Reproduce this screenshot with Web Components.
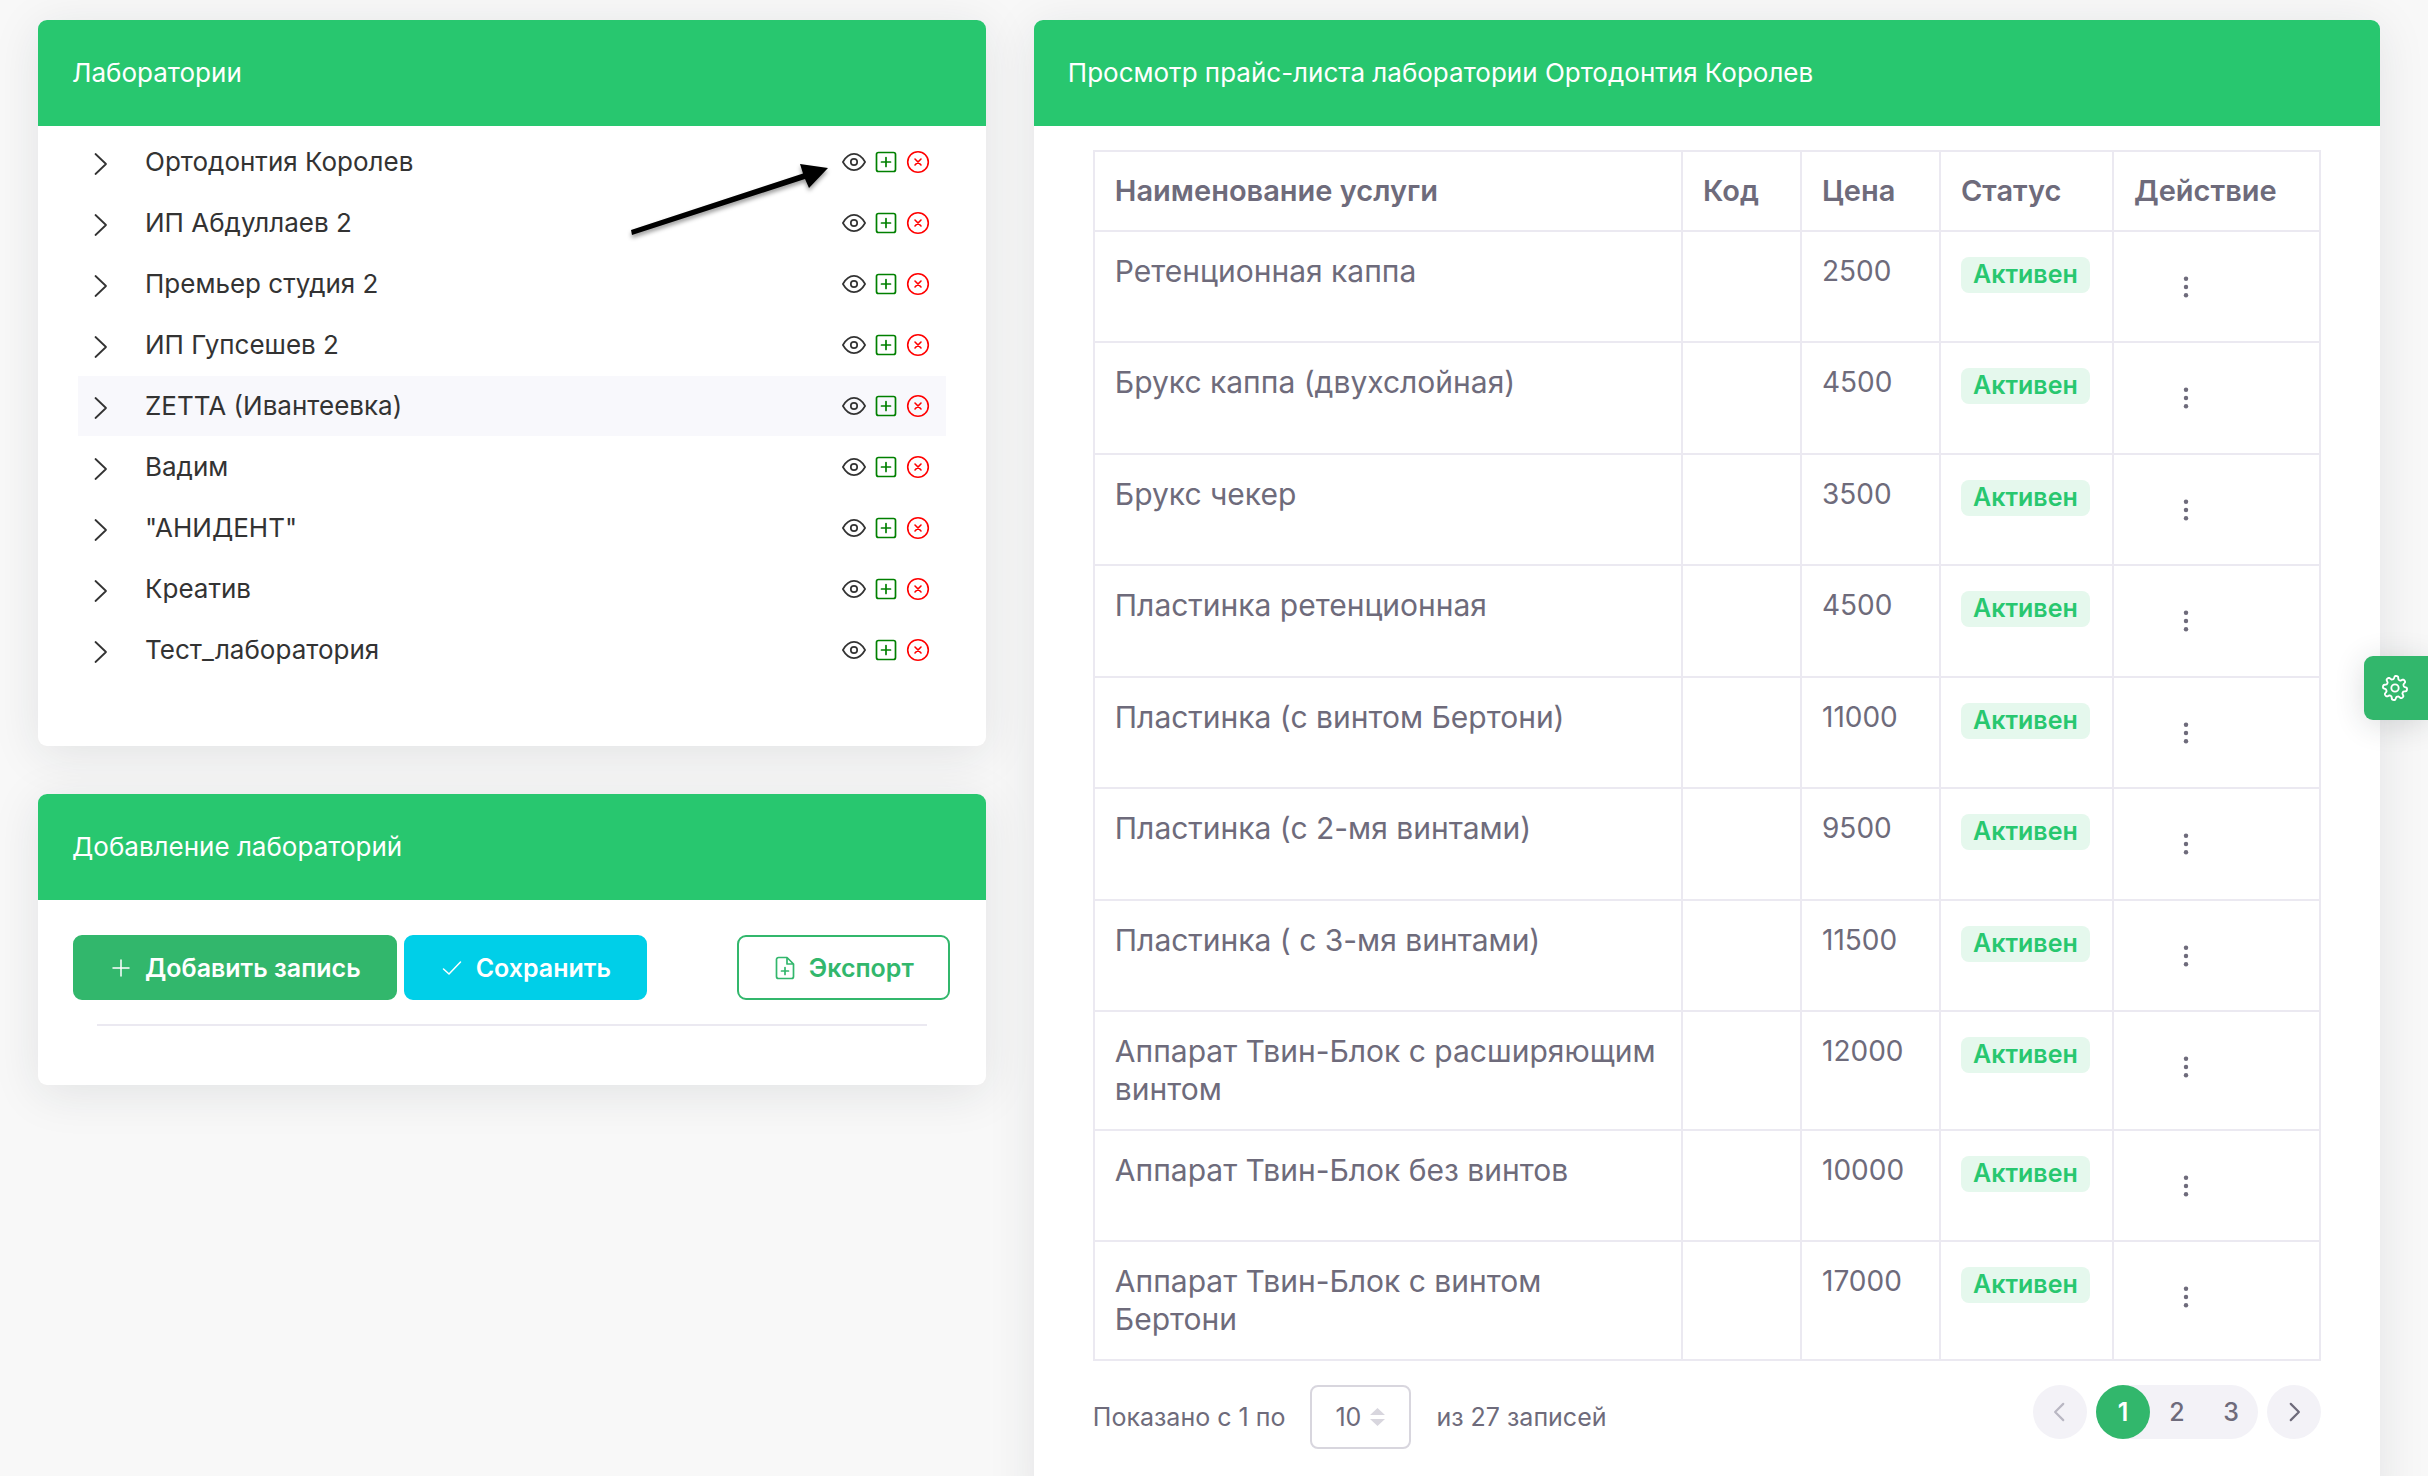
<!DOCTYPE html>
<html lang="ru">
<head>
<meta charset="utf-8">
<meta name="viewport" content="width=device-width, initial-scale=1">
<title>Лаборатории</title>
<style>
  html, body { height: 100%; }
  body {
    margin: 0; background: #f8f8f8; overflow: hidden; color: #6e6b7b;
    font-family: Inter, "Noto Sans", sans-serif; font-size: 25px; line-height: 36px;
    --green: #28c76f; --primary: #32b76c; --line: #ebe9f1;
  }
</style>
</head>
<body>
<lab-page></lab-page>

<script>
const svg = (size, body, width = 2) =>
  `<svg width="${size}" height="${size}" viewBox="0 0 24 24" fill="none" stroke="currentColor" stroke-width="${width}" stroke-linecap="round" stroke-linejoin="round" aria-hidden="true">${body}</svg>`;

const icons = {
  chevron: svg(24, '<path d="M6.500 2l10.500 10L6.500 22"/>', 1.8),
  left: svg(26, '<path d="M15 4.500L7.500 12l7.500 7.500"/>', 2),
  right: svg(26, '<path d="M9 4.500l7.500 7.500L9 19.500"/>', 2),
  eye: svg(24, '<path d="M.9 12C4 6.500 7.600 3.900 12 3.900S20 6.500 23.100 12c-3.100 5.500-6.700 8.100-11.100 8.100S4 17.500.9 12z"/><circle cx="12" cy="12" r="3.200"/>', 1.7),
  plusBox: svg(24, '<rect x="2.500" y="2.500" width="19" height="19" rx="2"/><path d="M12 7.500v9M7.500 12h9"/>', 1.7),
  cross: svg(24, '<circle cx="12" cy="12" r="10.300"/><path d="M9 9l6 6M15 9l-6 6"/>', 1.6),
  plus: svg(24, '<path d="M12 4v16M4 12h16"/>', 1.5),
  check: svg(24, '<path d="M3.500 13l5.500 5L20.500 6"/>', 1.5),
  file: svg(24, '<path d="M14 1.500H5.500a2 2 0 0 0-2 2v17a2 2 0 0 0 2 2h13a2 2 0 0 0 2-2V8zM14 1.500V8h6.500M12 11.500v7M8.500 15h7"/>', 1.7),
  dots: svg(28, '<g fill="currentColor" stroke="none"><circle cx="12" cy="5" r="1.900"/><circle cx="12" cy="12" r="1.900"/><circle cx="12" cy="19" r="1.900"/></g>'),
  gear: (() => {
    let d = '';
    for (let i = 0; i < 144; i++) {
      const a = i / 144 * Math.PI * 2;
      const r = 9.7 + 1.5 * Math.tanh(2 * Math.sin(a * 8 + .6));
      d += (i ? 'L' : 'M') + (12 + r * Math.cos(a)).toFixed(2) + ' ' + (12 + r * Math.sin(a)).toFixed(2);
    }
    return svg(26, `<path d="${d}z"/><circle cx="12" cy="12" r="3.400"/>`, 1.7);
  })()
};

function define(name, html, setup) {
  const template = document.createElement('template');
  template.innerHTML = html;
  customElements.define(name, class extends HTMLElement {
    constructor() {
      super();
      this.attachShadow({ mode: 'open' }).append(template.content.cloneNode(true));
    }
    connectedCallback() { if (setup) setup(this, this.shadowRoot); }
  });
}

define('app-icon', `<style>:host{display:inline-flex}span,svg{display:block}</style><span></span>`,
  (host, root) => { root.querySelector('span').innerHTML = icons[host.getAttribute('name')] || ''; });

define('lab-card', `
<style>
  :host { display: block; background: #fff; border-radius: 9px; box-shadow: 0 8px 48px rgba(34,41,47,.1); }
  header { display: flex; align-items: center; min-height: 36px; padding: 35px 34px; background: var(--green); color: #fff; border-radius: 9px 9px 0 0; }
  h2 { margin: 0; font-size: 26px; line-height: 36px; font-weight: 400; }
</style>
<header><h2><slot name="title"></slot></h2></header>
<slot></slot>`);

define('tree-row', `
<style>
  :host { display: flex; align-items: center; box-sizing: border-box; height: 61px; padding: 0 16px 2px 11px; color: #333; }
  :host([active]) { background: linear-gradient(#f8f8fc, #f8f8fc) 0 0 / 100% 60px no-repeat; }
  button { display: flex; padding: 0; border: 0; background: none; color: inherit; cursor: pointer; }
  .name { flex: 1; padding-left: 32px; font-size: 26px; line-height: 36px; }
  .toggle { padding-top: 4px; }
  .actions { display: flex; gap: 8px; }
  .add { color: #008000; }
  .remove { color: #f00; }
</style>
<button class="toggle" aria-label="Развернуть"><app-icon name="chevron"></app-icon></button>
<span class="name"><slot></slot></span>
<span class="actions">
  <button aria-label="Просмотр"><app-icon name="eye"></app-icon></button>
  <button class="add" aria-label="Добавить"><app-icon name="plusBox"></app-icon></button>
  <button class="remove" aria-label="Удалить"><app-icon name="cross"></app-icon></button>
</span>`);

define('lab-tree', `
<style>:host { display: block; padding: 6px 40px 65px; }</style>
<slot></slot>`);

define('app-button', `
<style>
  :host { display: inline-flex; }
  button { display: flex; align-items: center; gap: 12px; height: 65px; padding: 0 34px; border: 2px solid var(--primary); border-radius: 9px;
    background: var(--primary); color: #fff; font: 600 25px/36px Inter, "Noto Sans", sans-serif; cursor: pointer; }
  :host([kind="info"]) button { background: #00cfe8; border-color: #00cfe8; }
  :host([kind="outline"]) button { background: #fff; color: var(--primary); }
</style>
<button type="button"><app-icon></app-icon><slot></slot></button>`,
  (host, root) => {
    const icon = document.createElement('app-icon');
    icon.setAttribute('name', host.getAttribute('icon'));
    root.querySelector('app-icon').replaceWith(icon);
  });

define('lab-toolbar', `
<style>
  :host { display: block; padding: 35px 36px 59px 35px; }
  .bar { display: flex; gap: 7px; }
  .end { margin-left: auto; }
  hr { margin: 24px 23px 0 24px; border: 0; border-top: 2px solid var(--line); }
</style>
<div class="bar">
  <app-button icon="plus">Добавить запись</app-button>
  <app-button kind="info" icon="check">Сохранить</app-button>
  <app-button class="end" kind="outline" icon="file">Экспорт</app-button>
</div>
<hr>`);

define('status-badge', `
<style>
  :host { display: block; width: fit-content; box-sizing: border-box; height: 36px; padding: 0 12px; border-radius: 8px; background: #e5f8ed; color: var(--green);
    font-size: 25px; line-height: 34px; font-weight: 600; }
</style><slot></slot>`);

const services = [
  ['Ретенционная каппа', 2500], ['Брукс каппа (двухслойная)', 4500], ['Брукс чекер', 3500],
  ['Пластинка ретенционная', 4500], ['Пластинка (с винтом Бертони)', 11000], ['Пластинка (с 2-мя винтами)', 9500],
  ['Пластинка ( с 3-мя винтами)', 11500], ['Аппарат Твин-Блок с расширяющим винтом', 12000],
  ['Аппарат Твин-Блок без винтов', 10000], ['Аппарат Твин-Блок с винтом Бертони', 17000]
];

define('price-table', `
<style>
  :host { display: block; }
  table { width: 100%; border-collapse: collapse; table-layout: fixed; font-size: 30px; line-height: 38px; }
  th, td { box-sizing: content-box; padding: 20px; border: 2px solid var(--line); text-align: left; vertical-align: top; }
  th { font-size: 29px; font-weight: 600; white-space: nowrap; }
  td { height: 69px; }
  tr:nth-child(even) td { height: 70px; }
  tr:nth-child(8) td, tr:nth-child(10) td { height: 77px; }
  th.code { width: 77px; } th.price { width: 97px; } th.status { width: 131px; } th.action { width: 165px; }
  td.price { padding-right: 0; font-size: 28px; white-space: nowrap; }
  tr td.state, tr td.menu { height: auto; }
  td.state { padding: 25px 0 0 20px; }
  td.menu { padding: 38px 0 0 55px; }
  button { display: block; padding: 3px; border: 0; background: none; color: inherit; }
  app-icon { display: flex; }
</style>
<table>
  <thead><tr><th scope="col">Наименование услуги</th><th class="code" scope="col">Код</th><th class="price" scope="col">Цена</th><th class="status" scope="col">Статус</th><th class="action" scope="col">Действие</th></tr></thead>
  <tbody></tbody>
</table>`, (host, root) => {
  root.querySelector('tbody').innerHTML = services.map(([name, price]) =>
    `<tr><td>${name}</td><td></td><td class="price">${price}</td><td class="state"><status-badge>Активен</status-badge></td><td class="menu"><button type="button" aria-label="Меню"><app-icon name="dots"></app-icon></button></td></tr>`).join('');
});

define('page-size', `
<style>
  :host { display: flex; align-items: center; gap: 25px; }
  .box { display: grid; align-items: center; }
  .box > * { grid-area: 1 / 1; }
  select { appearance: none; width: 101px; height: 64px; margin: 0; padding: 0 0 0 23px; border: 2px solid #d8d6de; border-radius: 8px; background: #fff;
    color: inherit; font: inherit; }
  svg { justify-self: end; margin-right: 26px; pointer-events: none; }
</style>
<label for="size">Показано с 1 по</label>
<span class="box">
  <select id="size"><option>10</option><option>25</option><option>50</option></select>
  <svg width="15" height="18" viewBox="0 0 15 18" fill="#d8d6de"><path d="M0 7L7.500 0 15 7zM0 11h15l-7.500 7z"/></svg>
</span>
<span>из 27 записей</span>`);

define('page-nav', `
<style>
  :host { display: flex; gap: 9px; }
  a { display: flex; align-items: center; justify-content: center; width: 54px; height: 54px; border-radius: 50%; color: #6e6b7b; text-decoration: none; font-weight: 500; }
  .round, .pages { background: #f3f2f7; }
  .off { color: #b9b7c3; }
  .pages { display: flex; border-radius: 27px; }
  .current { background: var(--primary); color: #fff; font-weight: 600; }
</style>
<a class="round off" href="#" aria-label="Назад"><app-icon name="left"></app-icon></a>
<span class="pages"><a class="current" href="#1">1</a><a href="#2">2</a><a href="#3">3</a></span>
<a class="round" href="#next" aria-label="Вперёд"><app-icon name="right"></app-icon></a>`);

define('settings-tab', `
<style>
  :host { position: fixed; right: 0; top: calc(50% - 82px); z-index: 2; }
  button { display: flex; align-items: center; width: 64px; height: 64px; padding: 0 0 0 18px; border: 0; border-radius: 9px 0 0 9px; background: var(--primary); color: #fff; box-shadow: 0 4px 30px rgba(34,41,47,.16); }
</style>
<button type="button" aria-label="Настройки"><app-icon name="gear"></app-icon></button>`);

define('pointer-arrow', `
<style>
  :host { position: absolute; left: 625px; top: 158px; z-index: 1; pointer-events: none; }
  svg { display: block; filter: drop-shadow(0 3px 2px rgba(0,0,0,.4)); }
</style>
<svg width="210" height="86" viewBox="0 0 210 86" aria-hidden="true"><path d="M6 72L178 15.500 175 6l28 4-19 20-4-9L7 77z"/></svg>`);

define('lab-page', `
<style>
  :host { display: grid; grid-template-columns: minmax(0, 5fr) minmax(0, 7fr); align-items: start; padding: 20px 24px 0 14px; }
  .side, .main { padding: 0 24px; min-width: 0; }
  .side { display: flex; flex-direction: column; gap: 48px; }
  .price { padding: 24px 59px 60px; }
  .foot { display: flex; justify-content: space-between; align-items: flex-start; padding-top: 24px; }
</style>
<div class="side">
  <lab-card><span slot="title">Лаборатории</span>
    <lab-tree>
      <tree-row>Ортодонтия Королев</tree-row>
      <tree-row>ИП Абдуллаев 2</tree-row>
      <tree-row>Премьер студия 2</tree-row>
      <tree-row>ИП Гупсешев 2</tree-row>
      <tree-row active>ZETTA (Ивантеевка)</tree-row>
      <tree-row>Вадим</tree-row>
      <tree-row>"АНИДЕНТ"</tree-row>
      <tree-row>Креатив</tree-row>
      <tree-row>Тест_лаборатория</tree-row>
    </lab-tree>
  </lab-card>
  <lab-card><span slot="title">Добавление лабораторий</span><lab-toolbar></lab-toolbar></lab-card>
</div>
<div class="main">
  <lab-card><span slot="title">Просмотр прайс-листа лаборатории Ортодонтия Королев</span>
    <div class="price">
      <price-table></price-table>
      <div class="foot"><page-size></page-size><page-nav></page-nav></div>
    </div>
  </lab-card>
</div>
<pointer-arrow></pointer-arrow>
<settings-tab></settings-tab>`);
</script>
</body>
</html>
